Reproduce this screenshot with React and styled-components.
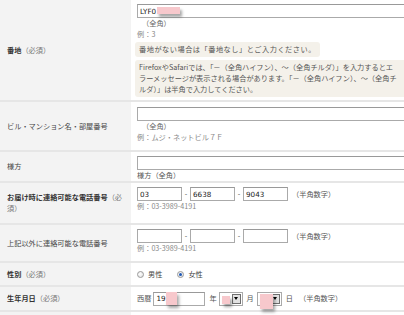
import styled, { createGlobalStyle } from 'styled-components'

const GlobalStyle = createGlobalStyle`
  * { box-sizing: border-box; }
  body {
    margin: 0;
    background: #fff;
    overflow: hidden;
    font-family: "Noto Sans CJK JP", "Noto Sans", sans-serif;
    font-size: 7.2px;
    color: #333;
  }
`

const Table = styled.div`
  width: 560px;
`

const Row = styled.div`
  display: grid;
  grid-template-columns: 131px 1fr;
  height: ${(p) => p.h}px;
  border-bottom: 2px solid #e6e6e6;
`

const Label = styled.div`
  display: flex;
  align-items: center;
  padding: 0 4px 0 7px;
  background: #f3f3f3;
  line-height: 11px;
  color: #444;
`

const Strong = styled.span`
  font-weight: bold;
  color: #333;
`

const Req = styled.span`
  color: #777;
`

const Cell = styled.div`
  display: flex;
  flex-direction: column;
  align-items: flex-start;
  justify-content: ${(p) => (p.center ? 'center' : 'flex-start')};
  padding: ${(p) => (p.center ? 0 : p.pt ?? 5)}px 6px 0;
  line-height: 11px;
`

const Line = styled.div`
  display: flex;
  align-items: center;
`

const Field = styled.span`
  position: relative;
  display: inline-block;
`

const TextInput = styled.input`
  display: block;
  width: ${(p) => p.w}px;
  height: 14px;
  margin: 0;
  padding: 0 2px;
  border: 1px solid #aaa;
  border-top-color: #999;
  background: #fff;
  font-family: "DejaVu Sans", "Noto Sans CJK JP", sans-serif;
  font-size: 7.2px;
  color: #222;
  outline: none;
`

const Redact = styled.span`
  position: absolute;
  left: ${(p) => p.x}px;
  top: ${(p) => p.y}px;
  width: ${(p) => p.w}px;
  height: ${(p) => p.h}px;
  background: #f7c8cc;
  box-shadow: 2px 3px 3px rgba(0, 0, 0, 0.35);
`

const Hint = styled.span`
  margin-left: ${(p) => p.ml ?? 0}px;
  color: ${(p) => p.color || '#666'};
`

const Example = styled.span`
  color: #888;
`

const Note = styled.div`
  margin: ${(p) => p.mt}px 0 0 -2px;
  padding: 2px 4px;
  align-self: ${(p) => (p.wide ? 'stretch' : 'flex-start')};
  background: #f4f1ea;
  border-radius: 3px;
  color: #555;
  white-space: nowrap;
  letter-spacing: ${(p) => p.ls ?? 0}px;
`

const Dash = styled.span`
  width: 8px;
  text-align: center;
  color: #444;
`

const Unit = styled.span`
  margin-left: ${(p) => p.ml ?? 0}px;
  margin-right: ${(p) => p.mr ?? 0}px;
  color: #555;
`

const Radio = styled.span`
  position: relative;
  width: 7px;
  height: 7px;
  border-radius: 50%;
  border: 1px solid #9a9a9a;
  background: radial-gradient(circle at 40% 40%, #fff, #dcdcdc);
  &::after {
    content: '';
    display: ${(p) => (p.checked ? 'block' : 'none')};
    position: absolute;
    left: 1px;
    top: 1px;
    width: 3px;
    height: 3px;
    border-radius: 50%;
    background: #1f58b5;
  }
`

const RadioLabel = styled.span`
  margin: 0 15px 0 4px;
  color: #444;
`

const Select = styled.span`
  position: relative;
  display: flex;
  width: ${(p) => p.w}px;
  height: 14px;
  padding: 1px;
  border: 1px solid #aaa;
  background: #fff;
`

const SelectArrow = styled.span`
  display: flex;
  align-items: center;
  justify-content: center;
  width: 9px;
  margin-left: auto;
  background: #e2e2e2;
  border: 1px solid #6f6f6f;
  &::after {
    content: '';
    border-left: 2.5px solid transparent;
    border-right: 2.5px solid transparent;
    border-top: 3px solid #000;
  }
`

function PhoneInputs({ values = ['', '', ''] }) {
  return (
    <Line>
      <TextInput w={45} defaultValue={values[0]} readOnly />
      <Dash>-</Dash>
      <TextInput w={45} defaultValue={values[1]} readOnly />
      <Dash>-</Dash>
      <TextInput w={45} defaultValue={values[2]} readOnly />
      <Unit ml={4}>（半角数字）</Unit>
    </Line>
  )
}

export default function App() {
  return (
    <>
      <GlobalStyle />
      <Table>
        <Row h={102}>
          <Label>
            <span>
              <Strong>番地</Strong>
              <Req>（必須）</Req>
            </span>
          </Label>
          <Cell pt={4}>
            <Field>
              <TextInput w={300} defaultValue="LYF0" readOnly />
              <Redact x={20} y={3} w={23} h={7} />
            </Field>
            <Hint ml={5}>（全角）</Hint>
            <Example>例：3</Example>
            <Note mt={2} ls={0.5}>番地がない場合は「番地なし」とご入力ください。</Note>
            <Note mt={3} wide>
              FirefoxやSafariでは、「－（全角ハイフン）、～（全角チルダ）」を入力するとエ
              <br />
              ラーメッセージが表示される場合があります。「－（全角ハイフン）、～（全角チ
              <br />
              ルダ）」は半角で入力してください。
            </Note>
          </Cell>
        </Row>

        <Row h={50}>
          <Label>
            <span>ビル・マンション名・部屋番号</span>
          </Label>
          <Cell>
            <TextInput w={300} readOnly />
            <Hint ml={5}>（全角）</Hint>
            <Example>例：ムジ・ネットビル７Ｆ</Example>
          </Cell>
        </Row>

        <Row h={31}>
          <Label>
            <span>様方</span>
          </Label>
          <Cell pt={4}>
            <TextInput w={300} readOnly />
            <Hint color="#555">様方（全角）</Hint>
          </Cell>
        </Row>

        <Row h={42}>
          <Label>
            <span>
              <Strong>お届け時に連絡可能な電話番号</Strong>
              <Req>（必須）</Req>
            </span>
          </Label>
          <Cell pt={4}>
            <PhoneInputs values={['03', '6638', '9043']} />
            <Example>例：03-3989-4191</Example>
          </Cell>
        </Row>

        <Row h={38}>
          <Label>
            <span>上記以外に連絡可能な電話番号</span>
          </Label>
          <Cell pt={4}>
            <PhoneInputs />
            <Example>例：03-3989-4191</Example>
          </Cell>
        </Row>

        <Row h={24}>
          <Label>
            <span>
              <Strong>性別</Strong>
              <Req>（必須）</Req>
            </span>
          </Label>
          <Cell center>
            <Line>
              <Radio />
              <RadioLabel>男性</RadioLabel>
              <Radio checked />
              <RadioLabel>女性</RadioLabel>
            </Line>
          </Cell>
        </Row>

        <Row h={25}>
          <Label>
            <span>
              <Strong>生年月日</Strong>
              <Req>（必須）</Req>
            </span>
          </Label>
          <Cell center>
            <Line>
              <Unit mr={2}>西暦</Unit>
              <Field>
                <TextInput w={52} defaultValue="19" readOnly />
                <Redact x={13} y={0} w={11} h={13} />
              </Field>
              <Unit ml={4} mr={2}>年</Unit>
              <Select w={24}>
                <Redact x={2} y={3} w={8} h={8} />
                <SelectArrow />
              </Select>
              <Unit ml={4} mr={3}>月</Unit>
              <Select w={25}>
                <Redact x={2} y={1} w={13} h={15} />
                <SelectArrow />
              </Select>
              <Unit ml={4} mr={3}>日</Unit>
              <Unit ml={3}>（半角数字）</Unit>
            </Line>
          </Cell>
        </Row>

        <Row h={20}>
          <Label />
          <Cell />
        </Row>
      </Table>
    </>
  )
}
